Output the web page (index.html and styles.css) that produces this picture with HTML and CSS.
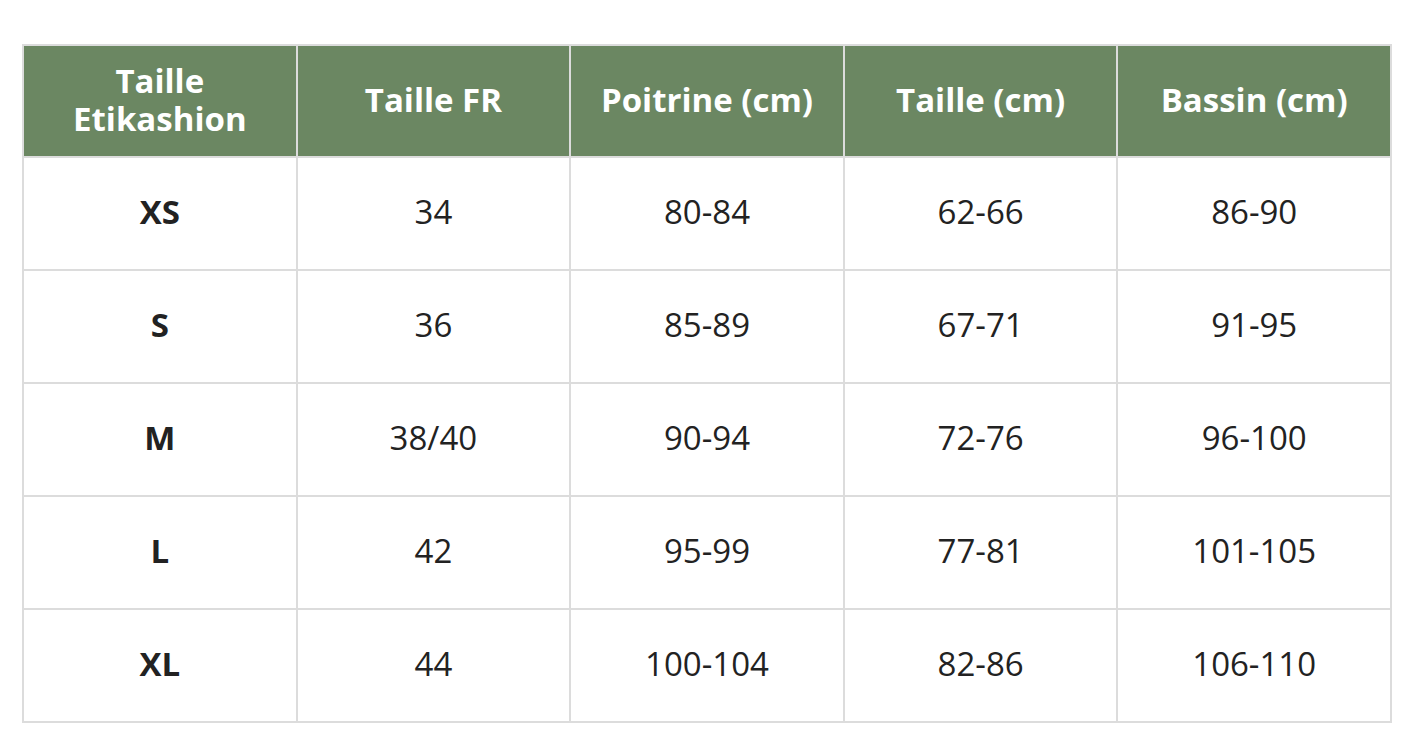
FILE: index.html
```html
<!DOCTYPE html>
<html lang="fr">
<head>
<meta charset="utf-8">
<title>Guide des tailles</title>
<link rel="stylesheet" href="styles.css">
</head>
<body>
<div class="wrap">
<table class="sizes">
  <colgroup><col><col><col><col><col></colgroup>
  <thead>
    <tr>
      <th>Taille<br>Etikashion</th>
      <th>Taille FR</th>
      <th>Poitrine (cm)</th>
      <th>Taille (cm)</th>
      <th>Bassin (cm)</th>
    </tr>
  </thead>
  <tbody>
    <tr><td class="sz">XS</td><td>34</td><td>80-84</td><td>62-66</td><td>86-90</td></tr>
    <tr><td class="sz">S</td><td>36</td><td>85-89</td><td>67-71</td><td>91-95</td></tr>
    <tr><td class="sz">M</td><td>38/40</td><td>90-94</td><td>72-76</td><td>96-100</td></tr>
    <tr><td class="sz">L</td><td>42</td><td>95-99</td><td>77-81</td><td>101-105</td></tr>
    <tr><td class="sz">XL</td><td>44</td><td>100-104</td><td>82-86</td><td>106-110</td></tr>
  </tbody>
</table>
</div>
</body>
</html>
```
FILE: styles.css
```css
html, body {
  margin: 0;
  padding: 0;
  background: #ffffff;
}
.wrap {
  padding: 44px 0 0 22px;
}
.sizes {
  width: 1370px;
  table-layout: fixed;
  border-collapse: collapse;
  font-family: "Open Sans", "Noto Sans", sans-serif;
  color: #222222;
}
.sizes th,
.sizes td {
  border: 2px solid #dcdcdc;
  text-align: center;
  vertical-align: middle;
  padding: 0 8px 3px;
  height: 108px;
  font-size: 33px;
  line-height: 38px;
}
.sizes th {
  height: 107px;
  background: #6b8762;
  color: #ffffff;
  font-weight: 700;
}
.sizes td.sz {
  font-weight: 700;
}
```
